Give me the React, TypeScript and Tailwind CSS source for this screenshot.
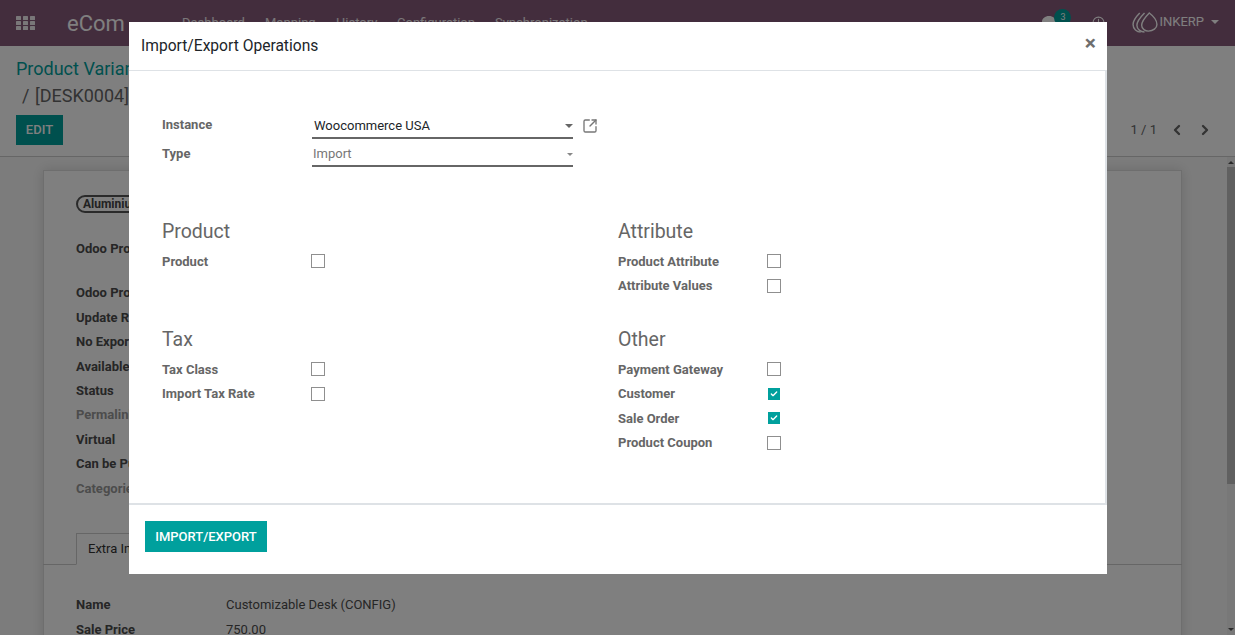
import React from 'react';
import { Check, ChevronLeft, ChevronRight, Clock, SquareArrowOutUpRight } from 'lucide-react';
import { FaComment } from 'react-icons/fa';

const navLinks = [
  { label: 'Dashboard', cls: 'w-[83px]' },
  { label: 'Mapping', cls: 'w-[71px]' },
  { label: 'History', cls: 'w-[61px]' },
  { label: 'Configuration', cls: 'w-[98px]' },
  { label: 'Synchronization', cls: 'w-[120px]' },
];

const sheetRows = [
  { label: 'Odoo Product', cls: 'mt-[25px]' },
  { label: 'Odoo Product Id', cls: 'mt-[27px]' },
  { label: 'Update Required', cls: 'mt-[7px]' },
  { label: 'No Export', cls: 'mt-[7px]' },
  { label: 'Available', cls: 'mt-[7px]' },
  { label: 'Status', cls: 'mt-[7px]' },
  { label: 'Permalink', cls: 'mt-[7px] text-[#999]' },
  { label: 'Virtual', cls: 'mt-[7px]' },
  { label: 'Can be Purchased', cls: 'mt-[7px]' },
  { label: 'Categories', cls: 'mt-[7px] text-[#999]' },
];

function AppsIcon() {
  return (
    <svg width="19" height="14" viewBox="0 0 19 14" fill="currentColor">
      {[0, 7, 14].map((x) =>
        [0, 5, 10].map((y) => <rect key={`${x}-${y}`} x={x} y={y} width="5" height="4" rx="0.6" />),
      )}
    </svg>
  );
}

function InkLogo() {
  return (
    <svg width="26" height="21" viewBox="0 0 27 22" fill="none" stroke="currentColor" strokeWidth="1.5">
      <path d="M8 1 C4 5 1 9 1 13 C1 18 5 21 9 21" />
      <path d="M13 1 C9 5 5 9 5 14 C5 18 9 21 13 21" />
      <path d="M18 1 C15 4 10 9 10 14 C10 18 14 20 17 20 C22 20 26 17 26 13 C26 9 22 4 18 1 Z" />
    </svg>
  );
}

function Caret({ cls }: { cls: string }) {
  return <span className={`inline-block h-0 w-0 border-x-[4px] border-t-[4px] border-x-transparent ${cls}`} />;
}

function CheckRow({ label, checked }: { label: string; checked?: boolean }) {
  return (
    <div className="flex h-[24.5px] items-center">
      <label className="w-[149px] text-[13px] font-bold text-[#666]">{label}</label>
      {checked ? (
        <span className="ml-[1px] flex h-[12px] w-[12px] items-center justify-center bg-[#00a09d]">
          <Check size={8} strokeWidth={4} className="text-white" />
        </span>
      ) : (
        <span className="h-[14px] w-[14px] border border-[#8f8f8f] bg-white" />
      )}
    </div>
  );
}

function Group({ title, children, cls }: { title: string; children: React.ReactNode; cls: string }) {
  return (
    <div className={cls}>
      <h2 className="translate-y-[1px] text-[19.5px] leading-[24px] font-normal text-[#666]">{title}</h2>
      <div className="mt-[6px]">{children}</div>
    </div>
  );
}

function Background() {
  return (
    <div className="flex h-[635px] flex-col overflow-hidden bg-white">
      <nav className="flex h-[46px] shrink-0 items-center bg-[#875a7b] text-white">
        <span className="ml-[16px] w-[51px] text-white/90"><AppsIcon /></span>
        <span className="w-[115px] text-[22px]">eCom</span>
        {navLinks.map((l) => (
          <span key={l.label} className={`${l.cls} text-[13px] text-white/90`}>{l.label}</span>
        ))}
        <span className="ml-auto flex -translate-y-[1px] items-center pr-[16px]">
          <span className="relative mr-[36px]">
            <FaComment size={14} />
            <span className="absolute top-[-6px] left-[12px] flex h-[17px] w-[17px] items-center justify-center rounded-full bg-[#00a09d] text-[9px]">3</span>
          </span>
          <Clock size={13} className="mr-[27px]" />
          <InkLogo />
          <span className="ml-[1px] text-[13px]">INKERP</span>
          <Caret cls="ml-[7px] border-t-white" />
        </span>
      </nav>

      <div className="flex h-[111px] shrink-0 flex-col border-b border-[#ccc] bg-white px-[16px]">
        <div className="mt-[10px] text-[18px] leading-[26px] text-[#00a09d]">Product Variants</div>
        <div className="mt-[2px] ml-[6px] text-[18px] leading-[24px] text-[#666]">/ <span className="ml-[1px]">[DESK0004] Customizable Desk</span></div>
        <div className="mt-[7px] flex items-center">
          <span className="flex h-[30px] w-[47px] items-center justify-center bg-[#00a09d] text-[13px] font-medium text-white">EDIT</span>
          <span className="ml-auto mr-[6px] flex items-center text-[#666]">
            <span className="mr-[12px] text-[13px]">1 / 1</span>
            <ChevronLeft size={16} strokeWidth={3.5} className="mr-[12px]" />
            <ChevronRight size={16} strokeWidth={3.5} />
          </span>
        </div>
      </div>

      <div className="flex min-h-0 flex-1">
        <div className="min-w-0 flex-1 bg-[#f9f9f9] pt-[13px] pr-[45px] pl-[43px]">
          <div className="h-[500px] border border-[#ddd] bg-white pl-[32px] shadow-[0_0_12px_rgba(0,0,0,0.15)]">
            <div className="mt-[24px] inline-block rounded-full border-2 border-[#555] px-[5px] text-[12px] leading-[14px] font-bold text-[#444]">Aluminium</div>
            <div className="text-[13px] leading-[17.4px] font-bold text-[#4c4c4c]">
              {sheetRows.map((r) => (
                <div key={r.label} className={r.cls}>{r.label}</div>
              ))}
            </div>
            <div className="mt-[36px] -mr-[1px] -ml-[33px] flex h-[32px] border-b border-[#ccc] pl-[33px]">
              <span className="h-[32px] border border-[#ccc] border-b-white bg-white px-[11px] pt-[5px] text-[13px] text-[#333]">Extra Info</span>
            </div>
            <div className="mt-[28px] flex text-[13px] leading-[24.5px] text-[#4c4c4c]">
              <div className="w-[150px] font-bold">
                <div>Name</div>
                <div>Sale Price</div>
              </div>
              <div>
                <div>Customizable Desk (CONFIG)</div>
                <div>750.00</div>
              </div>
            </div>
          </div>
        </div>
        <div className="relative flex w-[8px] shrink-0 flex-col items-center bg-[#f1f1f1]">
          <span className="mt-[4px] h-0 w-0 border-x-[3px] border-b-[3px] border-x-transparent border-b-[#555]" />
          <div className="mt-[3px] h-[317px] w-full bg-[#c1c1c1]" />
          <span className="mt-auto mb-[4px] h-0 w-0 border-x-[3px] border-t-[3px] border-x-transparent border-t-[#555]" />
        </div>
      </div>
    </div>
  );
}

export default function App() {
  return (
    <div className="relative h-[635px] overflow-hidden font-['Roboto',sans-serif]">
      <Background />
      <div className="absolute inset-0 bg-black/50" />
      <div className="absolute top-[22px] left-[129px] flex h-[552px] w-[978px] flex-col bg-white">
        <header className="flex h-[49px] shrink-0 items-center justify-between border-b border-[#dee2e6] px-[12px]">
          <h1 className="translate-y-[1px] text-[15.6px] font-normal text-[#212529]">Import/Export Operations</h1>
          <span className="-mr-[1px] mb-[5px] text-[21px] leading-none font-bold text-[#6e6e6e]">×</span>
        </header>

        <div className="h-[434px] shrink-0 border-r-2 border-b-2 border-[#dee2e6] px-[33px] pt-[40px]">
          <div className="flex h-[28px] items-end">
            <label className="w-[150px] self-center text-[13px] font-bold text-[#666]">Instance</label>
            <div className="flex h-[24px] w-[261px] items-center justify-between border-b-2 border-[#666] pl-[2px] text-[13px] text-[#212529]">
              Woocommerce USA
              <Caret cls="border-t-[#666]" />
            </div>
            <SquareArrowOutUpRight size={16} className="ml-[9px] translate-y-[1px] self-center text-[#777]" />
          </div>
          <div className="flex h-[28px] items-end">
            <label className="w-[150px] translate-y-[1px] self-center text-[13px] font-bold text-[#666]">Type</label>
            <div className="flex h-[24px] w-[261px] items-center justify-between border-b-2 border-[#666] pl-[1px] text-[13px] text-[#777]">
              Import
              <span className="inline-block h-0 w-0 border-x-[3px] border-t-[3px] border-x-transparent border-t-[#888]" />
            </div>
          </div>

          <div className="mt-[52px] grid grid-cols-[456px_1fr]">
            <div>
              <Group title="Product" cls="h-[108px]">
                <CheckRow label="Product" />
              </Group>
              <Group title="Tax" cls="">
                <CheckRow label="Tax Class" />
                <CheckRow label="Import Tax Rate" />
              </Group>
            </div>
            <div>
              <Group title="Attribute" cls="h-[108px]">
                <CheckRow label="Product Attribute" />
                <CheckRow label="Attribute Values" />
              </Group>
              <Group title="Other" cls="">
                <CheckRow label="Payment Gateway" />
                <CheckRow label="Customer" checked />
                <CheckRow label="Sale Order" checked />
                <CheckRow label="Product Coupon" />
              </Group>
            </div>
          </div>
        </div>

        <footer className="flex-1 px-[16px] pt-[16px]">
          <button className="flex h-[31px] w-[122px] items-center justify-center bg-[#00a09d] text-[13px] font-medium text-white">IMPORT/EXPORT</button>
        </footer>
      </div>
    </div>
  );
}
